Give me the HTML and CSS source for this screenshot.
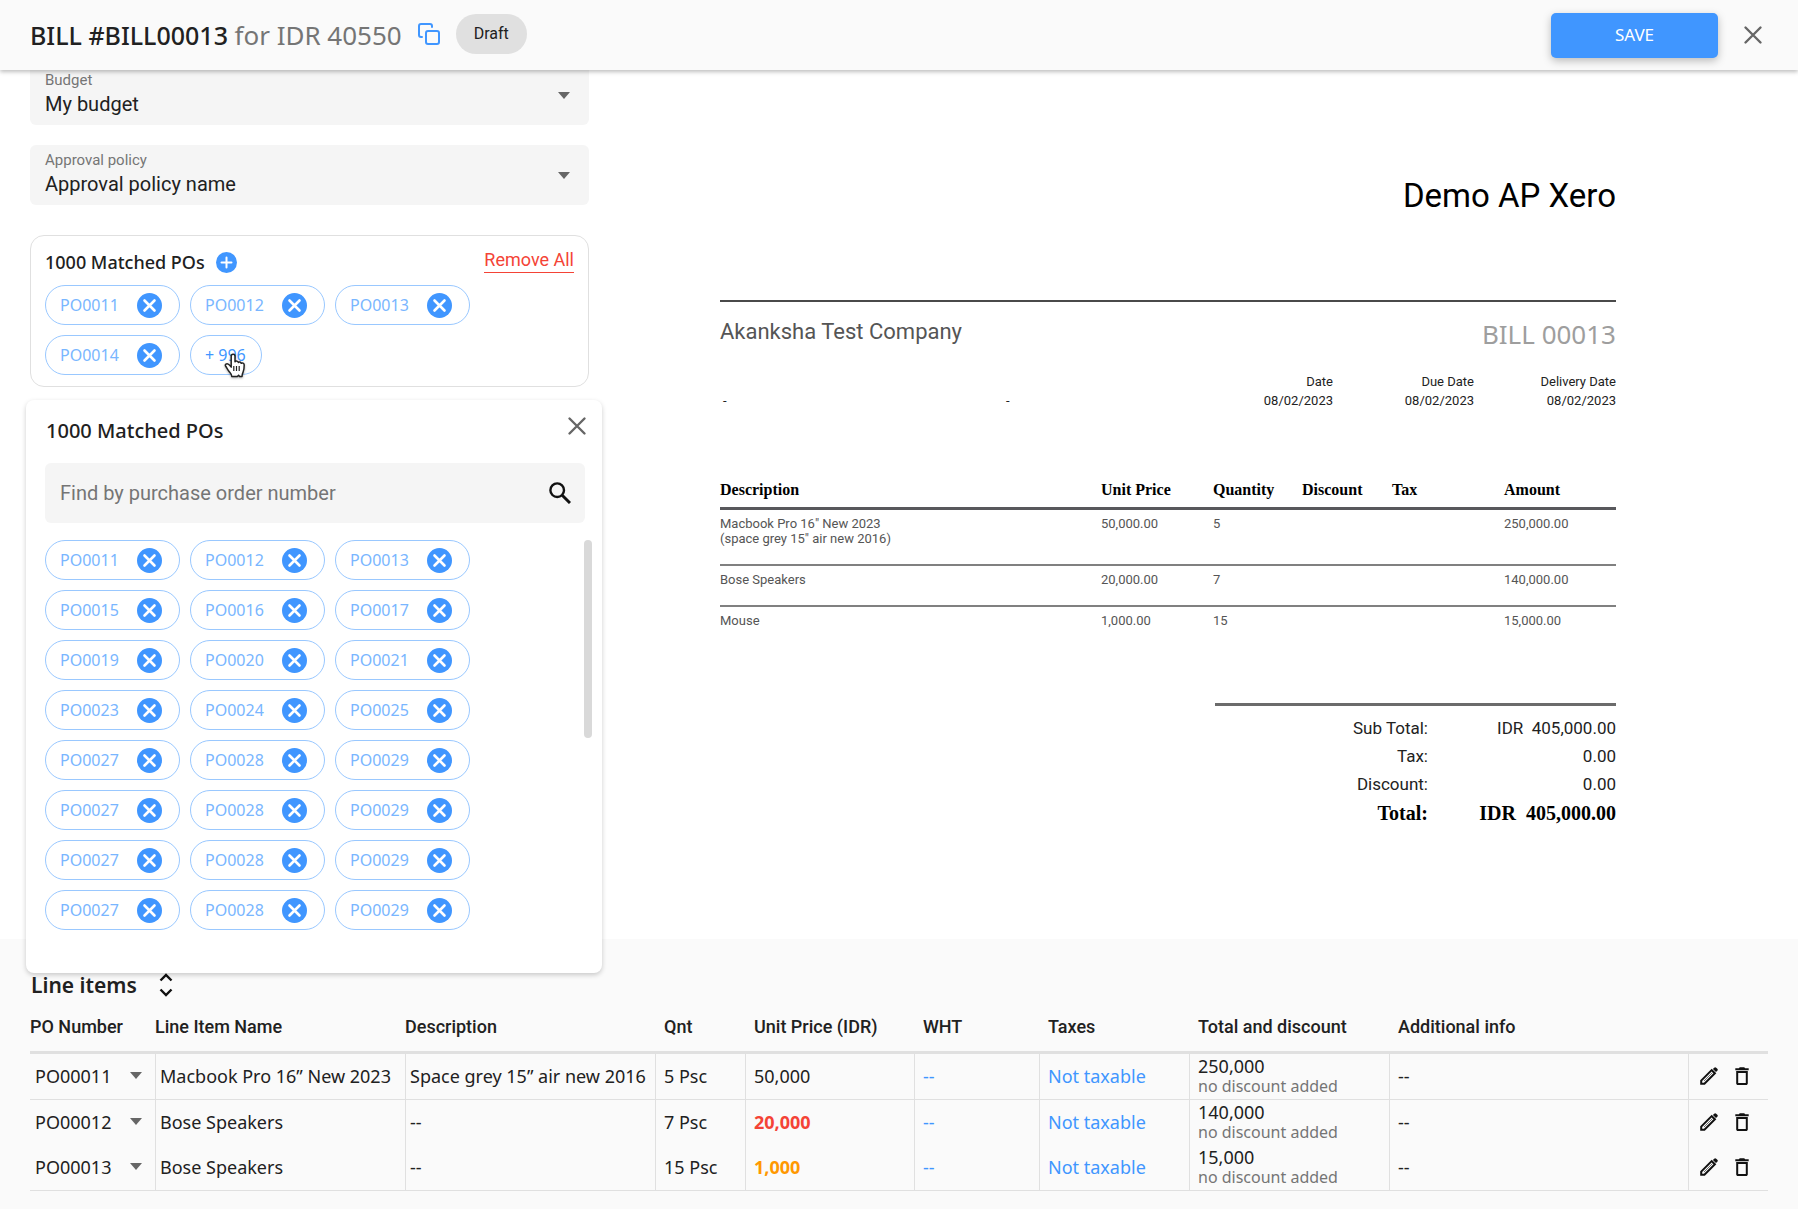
FILE: index.html
```html
<!DOCTYPE html>
<html lang="en">
<head>
<meta charset="utf-8">
<meta name="viewport" content="width=device-width, initial-scale=1">
<title>BILL #BILL00013</title>
<link rel="stylesheet" href="styles.css">
</head>
<body>
<svg class="sprite" aria-hidden="true">
  <symbol id="i-x" viewBox="0 0 24 24"><path d="M4.500 4.500l15 15M19.500 4.500l-15 15" fill="none" stroke="currentColor" stroke-width="2.400" stroke-linecap="round"/></symbol>
  <symbol id="i-remove" viewBox="0 0 25 25"><circle cx="12.500" cy="12.500" r="12.500" fill="#4096ff"/><path d="M7.500 7.500l10 10M17.500 7.500l-10 10" fill="none" stroke="#fff" stroke-width="2.600" stroke-linecap="round"/></symbol>
  <symbol id="i-arrow" viewBox="0 0 12 7"><path d="M0 0h12L6 7z" fill="currentColor"/></symbol>
  <symbol id="i-edit" viewBox="0 0 18 18"><path d="M1.200 16.800v-3.200L11.700 3.100l3.200 3.200L4.400 16.800z" fill="none" stroke="currentColor" stroke-width="2"/><path d="M4 14L12.500 5.500" stroke="currentColor" stroke-width=".6"/><path d="M12.900 2l1.300-1.300a1.400 1.400 0 0 1 2 0l1.100 1.100a1.400 1.400 0 0 1 0 2L16 5.100z" fill="currentColor"/></symbol>
  <symbol id="i-trash" viewBox="0 0 14 18"><path d="M.3 1.200h3.500l1-1h4.400l1 1h3.500v2H.3z" fill="currentColor"/><path d="M2.200 5h9.600v11.200a.7.7 0 0 1-.7.7H2.900a.7.7 0 0 1-.7-.7z" fill="none" stroke="currentColor" stroke-width="2"/></symbol>
</svg>

<header class="topbar">
  <h1 class="topbar-title">BILL #BILL00013 <span class="topbar-sum">for IDR 40550</span></h1>
  <button class="icon-btn copy" type="button" aria-label="Copy">
    <svg width="22" height="22" viewBox="0 0 22 22" fill="none" stroke="currentColor" stroke-width="2" stroke-linecap="round" stroke-linejoin="round"><rect x="8" y="8" width="13" height="13" rx="2"/><path d="M4 14H3a2 2 0 0 1-2-2V3a2 2 0 0 1 2-2h9a2 2 0 0 1 2 2v1"/></svg>
  </button>
  <span class="status">Draft</span>
  <button class="save" type="button">SAVE</button>
  <button class="icon-btn" type="button" aria-label="Close"><svg width="24" height="24"><use href="#i-x"/></svg></button>
</header>

<main class="workspace">
  <section class="form">
    <div class="field">
      <label class="field-label" for="budget">Budget</label>
      <select class="field-select" id="budget"><option>My budget</option></select>
      <svg class="field-arrow" width="12" height="7"><use href="#i-arrow"/></svg>
    </div>
    <div class="field">
      <label class="field-label" for="policy">Approval policy</label>
      <select class="field-select" id="policy"><option>Approval policy name</option></select>
      <svg class="field-arrow" width="12" height="7"><use href="#i-arrow"/></svg>
    </div>

    <div class="matched">
      <div class="matched-head">
        <h2 class="matched-title">1000 Matched POs</h2>
        <button class="icon-btn" type="button" aria-label="Add purchase order"><svg width="21" height="21" viewBox="0 0 21 21"><circle cx="10.500" cy="10.500" r="10.500" fill="#4096ff"/><path d="M10.500 5.500v10M5.500 10.500h10" stroke="#fff" stroke-width="2" stroke-linecap="round"/></svg></button>
        <a class="remove-all" href="#">Remove All</a>
      </div>
      <div class="chips">
        <span class="chip">PO0011<button class="icon-btn" type="button" aria-label="Remove PO0011"><svg width="25" height="25"><use href="#i-remove"/></svg></button></span>
        <span class="chip">PO0012<button class="icon-btn" type="button" aria-label="Remove PO0012"><svg width="25" height="25"><use href="#i-remove"/></svg></button></span>
        <span class="chip">PO0013<button class="icon-btn" type="button" aria-label="Remove PO0013"><svg width="25" height="25"><use href="#i-remove"/></svg></button></span>
        <span class="chip">PO0014<button class="icon-btn" type="button" aria-label="Remove PO0014"><svg width="25" height="25"><use href="#i-remove"/></svg></button></span>
        <button class="chip-more" type="button">+ 996
          <svg class="pointer" width="22" height="26" viewBox="0 0 22 26"><path d="M7.200 12.500V3.200a1.900 1.900 0 0 1 3.800 0v5.600c.6-1.100 3-.9 3.300.6.800-.9 2.700-.5 2.900.9 1-.7 3-.2 3 1.800 0 3.300-.2 5.300-1.200 7.200-.6 1.200-1 2-1 4.200h-2.400l-1-1.300-1.300 1.300H7.800c0-2.200-1.600-3.500-2.900-5.200C3.500 16.500 2.600 14.500 1.600 13c-.9-1.500 1-2.900 2.600-1.900 1.200.7 2 1.800 3 3z" fill="#fff" stroke="#222" stroke-width="1.500" stroke-linejoin="round"/><path d="M9.800 13v5M12.500 13v5M15.200 13v5" stroke="#222" stroke-width="1.200"/></svg>
        </button>
      </div>

      <div class="popover" role="dialog" aria-label="1000 Matched POs">
        <div class="popover-head">
          <h2 class="popover-title">1000 Matched POs</h2>
          <button class="icon-btn" type="button" aria-label="Close list"><svg width="24" height="24"><use href="#i-x"/></svg></button>
        </div>
        <div class="search">
          <input class="search-input" type="text" placeholder="Find by purchase order number" aria-label="Find by purchase order number">
          <svg width="22" height="22" viewBox="0 0 22 22" fill="none" stroke="#111" stroke-width="2.400"><circle cx="8.200" cy="8.200" r="6.800"/><path d="M13.200 13.200L21 21" stroke-width="3"/></svg>
        </div>
        <div class="popover-list">
          <span class="chip">PO0011<button class="icon-btn" type="button" aria-label="Remove PO0011"><svg width="25" height="25"><use href="#i-remove"/></svg></button></span>
          <span class="chip">PO0012<button class="icon-btn" type="button" aria-label="Remove PO0012"><svg width="25" height="25"><use href="#i-remove"/></svg></button></span>
          <span class="chip">PO0013<button class="icon-btn" type="button" aria-label="Remove PO0013"><svg width="25" height="25"><use href="#i-remove"/></svg></button></span>
          <span class="chip">PO0015<button class="icon-btn" type="button" aria-label="Remove PO0015"><svg width="25" height="25"><use href="#i-remove"/></svg></button></span>
          <span class="chip">PO0016<button class="icon-btn" type="button" aria-label="Remove PO0016"><svg width="25" height="25"><use href="#i-remove"/></svg></button></span>
          <span class="chip">PO0017<button class="icon-btn" type="button" aria-label="Remove PO0017"><svg width="25" height="25"><use href="#i-remove"/></svg></button></span>
          <span class="chip">PO0019<button class="icon-btn" type="button" aria-label="Remove PO0019"><svg width="25" height="25"><use href="#i-remove"/></svg></button></span>
          <span class="chip">PO0020<button class="icon-btn" type="button" aria-label="Remove PO0020"><svg width="25" height="25"><use href="#i-remove"/></svg></button></span>
          <span class="chip">PO0021<button class="icon-btn" type="button" aria-label="Remove PO0021"><svg width="25" height="25"><use href="#i-remove"/></svg></button></span>
          <span class="chip">PO0023<button class="icon-btn" type="button" aria-label="Remove PO0023"><svg width="25" height="25"><use href="#i-remove"/></svg></button></span>
          <span class="chip">PO0024<button class="icon-btn" type="button" aria-label="Remove PO0024"><svg width="25" height="25"><use href="#i-remove"/></svg></button></span>
          <span class="chip">PO0025<button class="icon-btn" type="button" aria-label="Remove PO0025"><svg width="25" height="25"><use href="#i-remove"/></svg></button></span>
          <span class="chip">PO0027<button class="icon-btn" type="button" aria-label="Remove PO0027"><svg width="25" height="25"><use href="#i-remove"/></svg></button></span>
          <span class="chip">PO0028<button class="icon-btn" type="button" aria-label="Remove PO0028"><svg width="25" height="25"><use href="#i-remove"/></svg></button></span>
          <span class="chip">PO0029<button class="icon-btn" type="button" aria-label="Remove PO0029"><svg width="25" height="25"><use href="#i-remove"/></svg></button></span>
          <span class="chip">PO0027<button class="icon-btn" type="button" aria-label="Remove PO0027"><svg width="25" height="25"><use href="#i-remove"/></svg></button></span>
          <span class="chip">PO0028<button class="icon-btn" type="button" aria-label="Remove PO0028"><svg width="25" height="25"><use href="#i-remove"/></svg></button></span>
          <span class="chip">PO0029<button class="icon-btn" type="button" aria-label="Remove PO0029"><svg width="25" height="25"><use href="#i-remove"/></svg></button></span>
          <span class="chip">PO0027<button class="icon-btn" type="button" aria-label="Remove PO0027"><svg width="25" height="25"><use href="#i-remove"/></svg></button></span>
          <span class="chip">PO0028<button class="icon-btn" type="button" aria-label="Remove PO0028"><svg width="25" height="25"><use href="#i-remove"/></svg></button></span>
          <span class="chip">PO0029<button class="icon-btn" type="button" aria-label="Remove PO0029"><svg width="25" height="25"><use href="#i-remove"/></svg></button></span>
          <span class="chip">PO0027<button class="icon-btn" type="button" aria-label="Remove PO0027"><svg width="25" height="25"><use href="#i-remove"/></svg></button></span>
          <span class="chip">PO0028<button class="icon-btn" type="button" aria-label="Remove PO0028"><svg width="25" height="25"><use href="#i-remove"/></svg></button></span>
          <span class="chip">PO0029<button class="icon-btn" type="button" aria-label="Remove PO0029"><svg width="25" height="25"><use href="#i-remove"/></svg></button></span>
          <span class="scroll-thumb"></span>
        </div>
      </div>
    </div>
  </section>

  <article class="invoice">
    <h2 class="invoice-issuer">Demo AP Xero</h2>
    <div class="invoice-parties">
      <span class="invoice-company">Akanksha Test Company</span>
      <span class="invoice-number">BILL 00013</span>
    </div>
    <div class="invoice-meta">
      <span class="invoice-address">-</span>
      <span class="invoice-address">-</span>
      <dl class="invoice-date"><dt>Date</dt><dd>08/02/2023</dd></dl>
      <dl class="invoice-date"><dt>Due Date</dt><dd>08/02/2023</dd></dl>
      <dl class="invoice-date"><dt>Delivery Date</dt><dd>08/02/2023</dd></dl>
    </div>
    <table class="invoice-table">
      <colgroup><col><col class="inv-price"><col class="inv-qty"><col class="inv-disc"><col class="inv-tax"><col class="inv-price"></colgroup>
      <thead><tr><th>Description</th><th>Unit Price</th><th>Quantity</th><th>Discount</th><th>Tax</th><th>Amount</th></tr></thead>
      <tbody>
        <tr><td>Macbook Pro 16" New 2023<br>(space grey 15" air new 2016)</td><td>50,000.00</td><td>5</td><td></td><td></td><td>250,000.00</td></tr>
        <tr><td>Bose Speakers</td><td>20,000.00</td><td>7</td><td></td><td></td><td>140,000.00</td></tr>
        <tr><td>Mouse</td><td>1,000.00</td><td>15</td><td></td><td></td><td>15,000.00</td></tr>
      </tbody>
    </table>
    <dl class="totals">
      <dt>Sub Total:</dt><dd>IDR&nbsp; 405,000.00</dd>
      <dt>Tax:</dt><dd>0.00</dd>
      <dt>Discount:</dt><dd>0.00</dd>
      <dt class="grand">Total:</dt><dd class="grand">IDR&nbsp; 405,000.00</dd>
    </dl>
  </article>
</main>

<section class="lines">
  <div class="lines-head">
    <h2 class="lines-title">Line items</h2>
    <button class="icon-btn" type="button" aria-label="Expand line items"><svg width="14" height="24" viewBox="0 0 14 24" fill="none" stroke="#111" stroke-width="2.400"><path d="M1.500 7.500L7 2l5.500 5.500M1.500 16.500L7 22l5.500-5.500"/></svg></button>
  </div>
  <table class="lines-table">
    <colgroup><col class="c-po"><col class="c-name"><col class="c-name"><col class="c-qnt"><col class="c-price"><col class="c-wht"><col class="c-taxes"><col class="c-total"><col><col class="c-actions"></colgroup>
    <thead>
      <tr><th>PO Number</th><th>Line Item Name</th><th>Description</th><th>Qnt</th><th>Unit Price (IDR)</th><th>WHT</th><th>Taxes</th><th>Total and discount</th><th>Additional info</th><th></th></tr>
    </thead>
    <tbody>
      <tr class="ruled">
        <td><div class="po"><select class="po-select" aria-label="PO number"><option>PO00011</option></select><svg class="po-arrow" width="12" height="7"><use href="#i-arrow"/></svg></div></td>
        <td>Macbook Pro 16” New 2023</td><td>Space grey 15” air new 2016</td><td>5 Psc</td><td>50,000</td>
        <td><a class="tax" href="#">--</a></td><td><a class="tax" href="#">Not taxable</a></td>
        <td><div class="sum">250,000</div><div class="sum-note">no discount added</div></td><td>--</td>
        <td><div class="actions"><button class="icon-btn" type="button" aria-label="Edit"><svg width="18" height="18"><use href="#i-edit"/></svg></button><button class="icon-btn" type="button" aria-label="Delete"><svg width="14" height="18"><use href="#i-trash"/></svg></button></div></td>
      </tr>
      <tr>
        <td><div class="po"><select class="po-select" aria-label="PO number"><option>PO00012</option></select><svg class="po-arrow" width="12" height="7"><use href="#i-arrow"/></svg></div></td>
        <td>Bose Speakers</td><td>--</td><td>7 Psc</td><td class="over">20,000</td>
        <td><a class="tax" href="#">--</a></td><td><a class="tax" href="#">Not taxable</a></td>
        <td><div class="sum">140,000</div><div class="sum-note">no discount added</div></td><td>--</td>
        <td><div class="actions"><button class="icon-btn" type="button" aria-label="Edit"><svg width="18" height="18"><use href="#i-edit"/></svg></button><button class="icon-btn" type="button" aria-label="Delete"><svg width="14" height="18"><use href="#i-trash"/></svg></button></div></td>
      </tr>
      <tr class="ruled">
        <td><div class="po"><select class="po-select" aria-label="PO number"><option>PO00013</option></select><svg class="po-arrow" width="12" height="7"><use href="#i-arrow"/></svg></div></td>
        <td>Bose Speakers</td><td>--</td><td>15 Psc</td><td class="under">1,000</td>
        <td><a class="tax" href="#">--</a></td><td><a class="tax" href="#">Not taxable</a></td>
        <td><div class="sum">15,000</div><div class="sum-note">no discount added</div></td><td>--</td>
        <td><div class="actions"><button class="icon-btn" type="button" aria-label="Edit"><svg width="18" height="18"><use href="#i-edit"/></svg></button><button class="icon-btn" type="button" aria-label="Delete"><svg width="14" height="18"><use href="#i-trash"/></svg></button></div></td>
      </tr>
    </tbody>
  </table>
</section>
</body>
</html>
```
FILE: styles.css
```css
* { box-sizing: border-box; }
body { margin: 0; background: #fafafa; color: #212121; font: 18px/24px "Noto Sans", sans-serif; }
h1, h2, dl, dd { margin: 0; }
.sprite { position: absolute; width: 0; height: 0; }
svg { display: block; flex: none; }
.icon-btn { display: flex; padding: 0; border: 0; background: none; color: #666; cursor: pointer; }

/* top bar */
.topbar { position: relative; z-index: 2; display: flex; align-items: center; height: 70px; padding: 0 33px 0 30px; background: #fafafa; box-shadow: 0 2px 4px rgba(0, 0, 0, .25); }
.topbar-title { font-size: 25px; line-height: 32px; font-weight: 500; }
.topbar-sum { font-size: 26px; font-weight: 400; color: #757575; }
.copy { margin: 0 16px 2px; color: #4096ff; }
.status { margin-bottom: 2px; padding: 8px 18px; border-radius: 20px; background: #e0e0e0; font: 16px/24px Roboto, sans-serif; }
.save { width: 167px; height: 45px; margin: 0 23px 0 auto; border: 0; border-radius: 5px; background: #4096ff; color: #fff; font: 17px/24px "Noto Sans", sans-serif; box-shadow: 0 3px 8px rgba(0, 0, 0, .25); }

/* bill form */
.workspace { display: flex; align-items: flex-start; min-height: 869px; padding: 0 182px 0 30px; background: #fff; }
.form { flex: none; width: 559px; margin-top: -5px; }
.field { position: relative; height: 60px; margin-bottom: 20px; padding: 5px 15px; border-radius: 6px; background: #f5f5f5; font-family: Roboto, sans-serif; }
.field-label { display: block; color: #757575; font-size: 15px; line-height: 20px; }
.field-select { display: block; width: 100%; height: 28px; padding: 0; border: 0; appearance: none; background: none; color: #212121; font: 20px/28px Roboto, sans-serif; }
.field-arrow { position: absolute; top: 27px; right: 19px; color: #666; }

.matched { position: relative; margin-top: 30px; padding: 12px 14px 11px; border: 1px solid #e0e0e0; border-radius: 14px; }
.matched-head { display: flex; align-items: flex-start; margin-bottom: 9px; }
.matched-head .icon-btn { margin: 4px auto 0 11px; }
.matched-title { font-size: 18px; line-height: 28px; font-weight: 500; }
.remove-all { border-bottom: 1px solid #f44336; color: #f44336; font: 18px/24px Roboto, sans-serif; text-decoration: none; }
.chips, .popover-list { display: flex; flex-wrap: wrap; gap: 10px; }
.chip, .chip-more { display: flex; align-items: center; justify-content: space-between; height: 40px; padding: 0 17px 0 14px; border: 1px solid #99c8ff; border-radius: 20px; background: #fff; color: #79b6ff; font: 16px/24px "Noto Sans", sans-serif; }
.chip { width: 135px; }
.chip-more { position: relative; min-width: 72px; color: #4096ff; padding: 0 14px; }
.pointer { position: absolute; left: 33px; top: 17px; filter: drop-shadow(0 1px 1px rgba(0, 0, 0, .3)); }

/* full list of matched orders */
.popover { position: absolute; z-index: 1; top: calc(100% + 14px); left: -5px; width: 576px; padding: 14px 17px 43px 19px; border-radius: 8px; background: #fff; box-shadow: 0 2px 5px rgba(0, 0, 0, .2); }
.popover-head { display: flex; align-items: flex-start; justify-content: space-between; margin: 0 -4px 15px 1px; }
.popover-title { font-size: 20px; line-height: 34px; font-weight: 500; }
.search { display: flex; align-items: center; height: 60px; margin-bottom: 17px; padding: 0 14px 0 15px; border-radius: 6px; background: #f5f5f5; }
.search-input { flex: 1; min-width: 0; padding: 0; border: 0; outline: 0; background: none; color: #212121; font: 20px/26px Roboto, sans-serif; }
.search-input::placeholder { color: #757575; opacity: 1; }
.popover-list { position: relative; padding-right: 100px; }
.scroll-thumb { position: absolute; top: 0; right: -7px; width: 8px; height: 198px; border-radius: 4px; background: #d9d9d9; }

/* bill preview */
.invoice { flex: 1; min-width: 0; margin-left: 131px; padding-top: 106px; color: #555; font-family: Roboto, sans-serif; }
.invoice-issuer { padding-bottom: 84px; border-bottom: 2px solid #4a4a4a; color: #000; font-size: 33px; line-height: 40px; font-weight: 400; text-align: right; }
.invoice-parties { display: flex; align-items: flex-start; justify-content: space-between; padding-top: 14px; }
.invoice-company { font-size: 22px; line-height: 32px; }
.invoice-number { color: #9e9e9e; font: 26px/36px "Noto Sans", sans-serif; }
.invoice-meta { display: grid; grid-template-columns: 283px 1fr 141px 141px 142px; align-items: end; margin: 20px 0 70px; color: #222; font-size: 13px; line-height: 19px; }
.invoice-address { padding-left: 3px; }
.invoice-date { text-align: right; }
.invoice-table { width: 100%; table-layout: fixed; border-collapse: separate; border-spacing: 0; font-size: 13px; line-height: 15px; text-align: left; }
.invoice-table th { padding: 0 0 7px; border-bottom: 3px solid #58585c; color: #000; font: bold 16px/20px "Liberation Serif", serif; }
.invoice-table td { padding: 6px 0 18px; border-bottom: 2px solid #808080; vertical-align: top; }
.invoice-table tr:last-child td { border-bottom: 0; }
.inv-price { width: 112px; }
.inv-qty { width: 89px; }
.inv-disc { width: 90px; }
.inv-tax { width: 112px; }
.totals { display: grid; grid-template-columns: 1fr 188px; width: 401px; margin: 57px 0 0 auto; padding-top: 8px; border-top: 3px solid #6b6b6b; color: #222; font-size: 17px; line-height: 28px; text-align: right; }
.grand { color: #000; font: bold 20px/30px "Liberation Serif", serif; }

/* line items */
.lines { padding: 32px 30px 18px; }
.lines-head { display: flex; align-items: center; gap: 22px; height: 28px; padding-left: 1px; }
.lines-title { font-size: 21px; line-height: 28px; font-weight: 600; }
.lines-table { width: 100%; table-layout: fixed; border-collapse: separate; border-spacing: 0; text-align: left; }
.lines-table th { height: 55px; padding: 4px 0 0 9px; border-bottom: 3px solid #e0e0e0; font: 500 18px/24px Roboto, sans-serif; white-space: nowrap; }
.lines-table th:nth-child(-n+3) { padding-left: 0; }
.lines-table td { height: 45px; padding: 0 0 2px 8px; border-left: 1px solid #e0e0e0; line-height: 20px; white-space: nowrap; }
.lines-table td:nth-child(-n+3) { padding-left: 4px; }
.lines-table td:first-child { border-left: 0; padding-left: 5px; }
.lines-table .ruled td { height: 46px; border-bottom: 1px solid #e0e0e0; }
.c-po, .c-wht { width: 125px; }
.c-name { width: 250px; }
.c-qnt { width: 90px; }
.c-price { width: 169px; }
.c-taxes { width: 150px; }
.c-total { width: 200px; }
.c-actions { width: 80px; }
.po { position: relative; }
.po-select { display: block; width: 100%; height: 24px; padding: 0; border: 0; appearance: none; background: none; color: #212121; font: 18px/24px "Noto Sans", sans-serif; }
.po-arrow { position: absolute; top: 8px; right: 13px; color: #666; }
.tax { color: #4096ff; text-decoration: none; }
.over { color: #f44336; font-weight: 700; }
.under { color: #ff9800; font-weight: 700; }
.sum-note { color: #757575; font-size: 16px; line-height: 20px; }
.actions { display: flex; gap: 17px; padding-left: 3px; }
.actions .icon-btn { color: #111; }
```
